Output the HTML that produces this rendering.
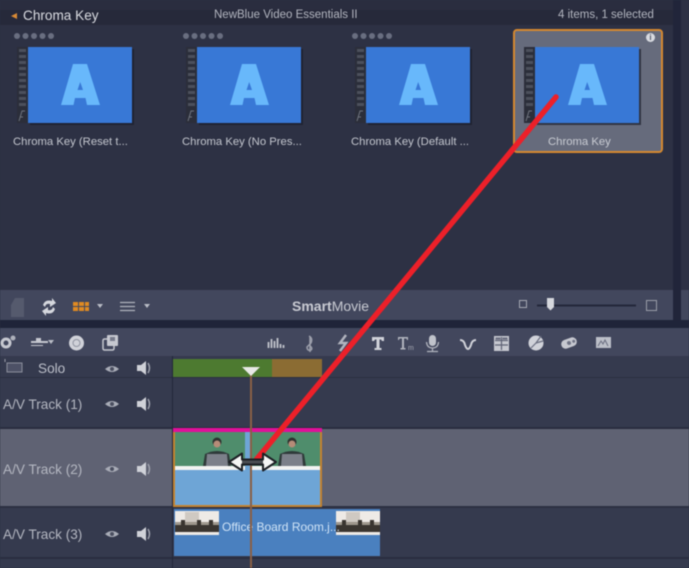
<!DOCTYPE html>
<html><head><meta charset="utf-8"><style>
html,body{margin:0;padding:0;background:#2c3042;}
#r{position:relative;width:689px;height:568px;overflow:hidden;background:#2d3144;font-family:"Liberation Sans",sans-serif;color:#c6c9d2;filter:blur(.6px);}
#r div{position:absolute;}
.t{white-space:nowrap;}
.lbl{font-size:11.3px;color:#c3c6ce;white-space:nowrap;}
.trk{font-size:13.6px;color:#b4b7c1;white-space:nowrap;}
</style></head><body><div id="r">
<!-- panels -->
<div style="left:0;top:0;width:689px;height:10px;background:#2a2d3f"></div>
<div style="left:0;top:10px;width:673px;height:15px;background:#26293a"></div>
<div style="left:673px;top:0;width:8px;height:320px;background:#21253a"></div>
<div style="left:681px;top:0;width:8px;height:320px;background:#2d3144"></div>
<div style="left:0;top:290px;width:673px;height:30px;background:#42475d"></div>
<div style="left:681px;top:290px;width:8px;height:30px;background:#42475d"></div>
<div style="left:0;top:320px;width:689px;height:8px;background:#1f2439"></div>
<div style="left:0;top:328px;width:689px;height:28px;background:#42475d"></div>
<div style="left:0;top:356px;width:689px;height:212px;background:#353a4e"></div>
<!-- header -->
<div style="left:11px;top:13px;width:0;height:0;border-style:solid;border-width:3.5px 6px 3.5px 0;border-color:transparent #d98a35 transparent transparent"></div>
<div class="t" style="left:23px;top:8px;font-size:13.6px;color:#dadce2">Chroma Key</div>
<div class="t" style="left:214px;top:9px;font-size:11.5px;color:#b3b6c0">NewBlue Video Essentials II</div>
<div class="t" style="left:558px;top:9px;font-size:11.5px;color:#b3b6c0">4 items, 1 selected</div>
<!-- selection -->
<div style="left:513px;top:29px;width:146px;height:120px;background:#666b7c;border:2px solid #d5882f;border-radius:4px"></div>
<div style="left:646px;top:33px;width:9px;height:9px;border-radius:50%;background:#d8dae0;color:#555a6b;font-size:8px;font-weight:bold;line-height:9px;text-align:center">i</div>
<!-- thumbs -->
<svg style="position:absolute;left:0;top:0" width="689" height="160">
<defs><g id="th"><rect x="0" y="0" width="11" height="76" fill="#2b2e3a"/><g fill="#4c505c"><rect x="2" y="2" width="7" height="3"/><rect x="2" y="8" width="7" height="3"/><rect x="2" y="14" width="7" height="3"/><rect x="2" y="20" width="7" height="3"/><rect x="2" y="26" width="7" height="3"/><rect x="2" y="32" width="7" height="3"/><rect x="2" y="38" width="7" height="3"/><rect x="2" y="44" width="7" height="3"/><rect x="2" y="50" width="7" height="3"/><rect x="2" y="56" width="7" height="3"/></g><path d="M2 74l3-10h3M3 70h3" stroke="#70747f" fill="none"/><rect x="13" y="2" width="104" height="76" fill="#1b1e2b" opacity=".7"/><rect x="11" y="0" width="104" height="76" fill="#3878d6"/><path d="M56 17 H70 L83 58 H70 L68.500 51 H58 L56.500 58 H44 Z M60.500 43 H66 L63.200 35 Z" fill="#68b8fb" fill-rule="evenodd"/></g>
<g id="s" fill="#696e80"><circle cx="3" cy="3" r="3"/><circle cx="11.500" cy="3" r="3"/><circle cx="20" cy="3" r="3"/><circle cx="28.500" cy="3" r="3"/><circle cx="37" cy="3" r="3"/></g></defs>
<use href="#th" x="17" y="47"/><use href="#th" x="186" y="47"/><use href="#th" x="355" y="47"/><use href="#th" x="524" y="47"/>
<use href="#s" x="14" y="33"/><use href="#s" x="183" y="33"/><use href="#s" x="352" y="33"/>
</svg>
<div class="lbl" style="left:13px;top:136px">Chroma Key (Reset t...</div>
<div class="lbl" style="left:182px;top:136px">Chroma Key (No Pres...</div>
<div class="lbl" style="left:351px;top:136px">Chroma Key (Default ...</div>
<div class="lbl" style="left:548px;top:136px;color:#c9ccd3">Chroma Key</div>
<!-- bottom toolbar text -->
<div class="t" style="left:292px;top:298px;font-size:14px;font-weight:bold;color:#c8cad2">Smart<span style="font-weight:normal">Movie</span></div>
<!-- timeline structure -->
<div style="left:0;top:377px;width:689px;height:1px;background:#2b2f41"></div>
<div style="left:0;top:427px;width:689px;height:2px;background:#2a2e40"></div>
<div style="left:0;top:429px;width:689px;height:77px;background:#5f6273"></div>
<div style="left:0;top:506px;width:689px;height:2px;background:#2c3042"></div>
<div style="left:0;top:557px;width:689px;height:2px;background:#2a2e40"></div>
<div style="left:172px;top:356px;width:1px;height:212px;background:#23273a"></div>
<div style="left:173px;top:359px;width:99px;height:18px;background:#4d7a30"></div>
<div style="left:272px;top:359px;width:50px;height:18px;background:#8b6c33"></div>
<!-- clip 2 -->
<div style="left:173px;top:428px;width:149px;height:79px;background:#6ea5d6;box-sizing:border-box;border:2px solid #c4832f"></div>
<div style="left:173px;top:428px;width:149px;height:4px;background:#e0109a"></div>
<svg style="position:absolute;left:175px;top:432px" width="145" height="42">
<rect width="70" height="34" fill="#4f8d6c"/><rect x="77" width="68" height="34" fill="#4f8d6c"/><rect x="70" width="7" height="38" fill="#6ea5d6"/>
<rect y="34" width="70" height="4" fill="#f2f3f2"/><rect x="77" y="34" width="68" height="4" fill="#f2f3f2"/>
<g id="p"><circle cx="42" cy="10" r="4.500" fill="#2e3230"/><ellipse cx="42" cy="12" rx="3.500" ry="3.500" fill="#b58c78"/><path d="M28 34 L30 22 Q42 16 54 22 L56 34Z" fill="#2f3a3a"/><path d="M31 34 L32 22 H52 L53 34Z" fill="#7c808a"/></g>
<use href="#p" x="75"/>
</svg>
<!-- clip 3 -->
<div style="left:174px;top:509px;width:206px;height:47px;background:#4a80bf"></div>
<svg style="position:absolute;left:175px;top:511px" width="205" height="24">
<g id="o"><rect width="44" height="24" fill="#eeeae6"/><rect x="10" y="1" width="14" height="11" fill="#cfc9c2"/><rect y="14" width="44" height="7" fill="#3a3530"/><rect y="11" width="44" height="3" fill="#8b8378" opacity=".8"/><rect x="6" y="9" width="4" height="6" fill="#3a3530"/><rect x="22" y="9" width="4" height="6" fill="#3a3530"/><rect x="34" y="9" width="4" height="6" fill="#3a3530"/></g>
<use href="#o" x="161"/>
</svg>
<div class="t" style="left:222px;top:520px;font-size:12px;color:#cfe3f6">Office Board Room.j...</div>
<!-- playhead -->
<div style="left:250px;top:374px;width:2px;height:194px;background:#8a5f45"></div>
<div style="left:242px;top:367px;width:0;height:0;border-style:solid;border-width:9px 9px 0 9px;border-color:#e8e9e6 transparent transparent transparent"></div>
<!-- track labels -->
<div class="trk" style="left:38px;top:361px;color:#bcbfc9">Solo</div>
<div class="trk" style="left:3px;top:397px">A/V Track (1)</div>
<div class="trk" style="left:3px;top:462px">A/V Track (2)</div>
<div class="trk" style="left:3px;top:527px">A/V Track (3)</div>
<!-- icons -->
<svg style="position:absolute;left:0;top:285px" width="689" height="283">
<defs>
<g id="eye"><path d="M0 4 Q7 -2 14 4 Q7 10 0 4Z" fill="#a9acb7"/><circle cx="7" cy="4" r="2" fill="#4a4e60"/></g>
<g id="spk"><path d="M0 2H4L9 -2V12L4 8H0Z" fill="#cfd1d8"/><path d="M11 0Q14 5 11 10" stroke="#9da0ac" stroke-width="1.500" fill="none"/></g>
</defs>
<!-- lower toolbar -->
<path d="M11 20 L15 13 H24 V32 H11Z" fill="#555a6d"/>
<path d="M43 20 Q45 14 52 16 L52 13 L56 18 L50 22 V19 Q46 18 45 22Z M55 24 Q53 30 46 28 L46 31 L42 26 L48 22 V25 Q52 26 53 22Z" fill="#d5d7dd"/>
<g fill="#e08a22"><rect x="73" y="17" width="5" height="4"/><rect x="79" y="17" width="5" height="4"/><rect x="85" y="17" width="4" height="4"/><rect x="73" y="22" width="5" height="4"/><rect x="79" y="22" width="5" height="4"/><rect x="85" y="22" width="4" height="4"/></g>
<path d="M97 19h6l-3 4Z" fill="#b9bcc6"/>
<path d="M120 17.500h15M120 21.500h15M120 25.500h15" stroke="#b0b3bd" stroke-width="1.200"/>
<path d="M144 19h6l-3 4Z" fill="#b9bcc6"/>
<rect x="519.500" y="15.500" width="7" height="7" fill="none" stroke="#a5a8b3"/>
<rect x="537" y="19.500" width="99" height="2" fill="#23273a"/>
<path d="M547 13h7v9l-3.500 3.500L547 22Z" fill="#d5d7dd"/>
<rect x="646.500" y="15.500" width="10" height="10" fill="none" stroke="#9a9da9"/>
<!-- upper toolbar -->
<circle cx="6" cy="58" r="4" fill="none" stroke="#c6c8d0" stroke-width="3"/><circle cx="13" cy="53" r="2.500" fill="#aeb1bb"/>
<path d="M36 53h5v3h7v2H31v-2h5ZM31 60h12v1H31Z" fill="#c6c8d0"/>
<path d="M48 55h6l-3 4Z" fill="#b9bcc6"/>
<circle cx="76.500" cy="58" r="7.500" fill="#d0d2d9"/><circle cx="76.500" cy="58" r="3.500" fill="none" stroke="#8f93a0"/>
<rect x="103" y="54" width="11" height="11" rx="1.500" fill="none" stroke="#c6c8d0" stroke-width="1.500"/><rect x="107" y="50" width="11" height="11" rx="1" fill="#c6c8d0"/><rect x="110" y="52" width="5" height="4" fill="#777b8b"/>
<path d="M268.500 57v6M271.500 54v9M274.500 56v7M277.500 53v10M280.500 59v4M283.500 60v3" stroke="#c0c3cb" stroke-width="1.800"/>
<path d="M309 51 Q313 53 311 58 L307 62 Q307 66 311 65 Q313 63 310 61 M310 52 V67" stroke="#9da0ac" stroke-width="1.500" fill="none"/>
<path d="M346 50 L340 58 L346 58 L340 66" stroke="#b0b3bd" stroke-width="2.500" fill="none"/>
<path d="M372 52H384V56H382L381 54.500H379.500V63H381.500V65H374.500V63H376.500V54.500H375L374 56H372Z" fill="#d0d2d9"/>
<path d="M398 52H408V55H407L406.500 53.500H404V63H405.500V64.500H400.500V63H402V53.500H399.500L399 55H398Z" fill="#b0b3bd"/><text x="408" y="65" font-size="7" fill="#a5a8b3" font-family="Liberation Sans">m</text>
<rect x="429" y="50" width="7" height="11" rx="3.500" fill="#c0c3cb"/><path d="M426.500 57Q427 63 432.500 63Q438 63 438.500 57M432.500 63V66M427 66.500H438" stroke="#b0b3bd" stroke-width="1.300" fill="none"/>
<path d="M460 55 Q464 55 465 60 Q466.500 64 468 64 Q469.500 64 471 60 Q472 55 476 55" stroke="#d0d2d9" stroke-width="2" fill="none"/>
<rect x="494" y="51" width="15" height="15" fill="#c6c8d0"/><path d="M495 55.500h13M495 60h13M501.500 52v13" stroke="#5f6376" stroke-width="1.200"/><rect x="495.500" y="52.500" width="5" height="2" fill="#6a6e80"/><rect x="502.500" y="52.500" width="5" height="2" fill="#6a6e80"/>
<circle cx="536" cy="58" r="7.500" fill="#d0d2d9"/><path d="M536 58L541 51M536 58L543 56M536 58L531 63" stroke="#6a6e80" stroke-width="1.200"/>
<g transform="rotate(-20 569 58)"><rect x="561" y="53.500" width="16" height="9" rx="4.500" fill="#c6c8d0"/><circle cx="569" cy="58" r="2" fill="#6f7385"/><circle cx="574" cy="58" r="1.500" fill="#6f7385"/></g>
<rect x="596" y="52" width="15" height="11" fill="#bcbfc8"/><path d="M598 61l3-5 2 3 2-4 3 6" stroke="#6a6e80" fill="none"/>
<!-- track icons -->
<rect x="7" y="78" width="15" height="9" fill="#4d5166" stroke="#8b8f9c"/><path d="M5 74v3" stroke="#9a9da9"/>
<use href="#eye" x="105" y="80"/><use href="#spk" x="137" y="78"/>
<use href="#eye" x="105" y="115"/><use href="#spk" x="137" y="114"/>
<use href="#eye" x="105" y="180"/><use href="#spk" x="137" y="179"/>
<use href="#eye" x="105" y="245"/><use href="#spk" x="137" y="244"/>
</svg>
<!-- red line + cursor -->
<svg style="position:absolute;left:0;top:0" width="689" height="568">
<line x1="556" y1="97" x2="256" y2="460" stroke="#ec2029" stroke-width="5.500" stroke-linecap="round"/>
<path d="M229 462 L242 453.500 V459.500 H263 V453.500 L276 462 L263 470.500 V464.500 H242 V470.500 Z" fill="#f4f5f4" stroke="#1c1f24" stroke-width="2" stroke-linejoin="round"/>
<rect x="242" y="460.500" width="21" height="3" fill="#4a4d52"/>
</svg>
</div></body></html>
